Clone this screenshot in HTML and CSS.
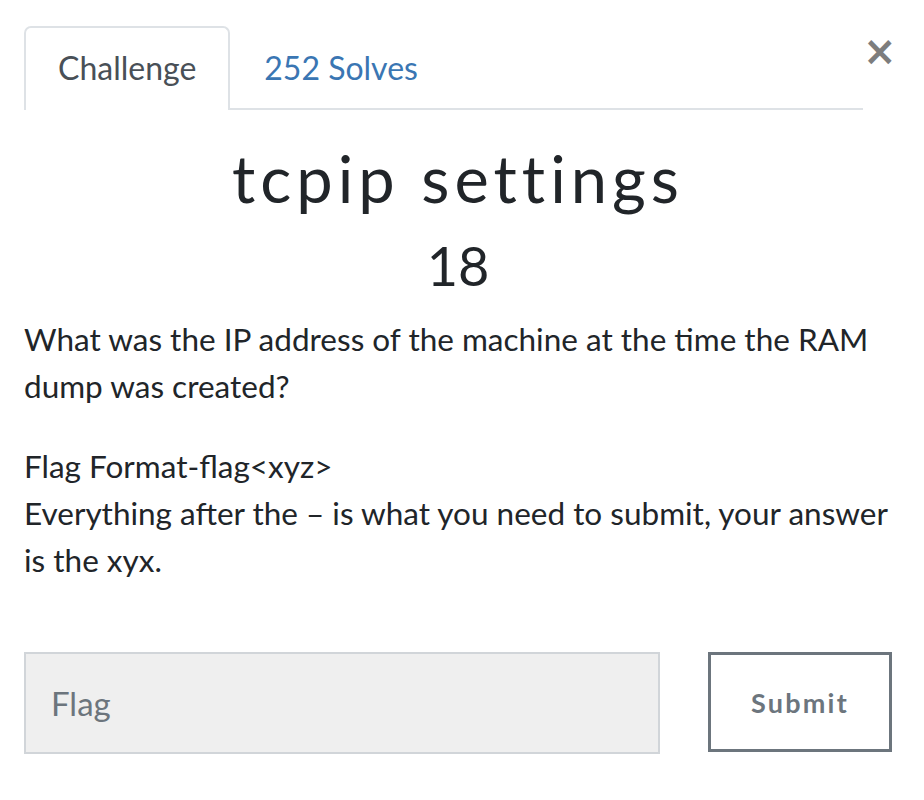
FILE: index.html
```html
<!DOCTYPE html>
<html lang="en">
<head>
<meta charset="UTF-8">
<meta name="viewport" content="width=device-width, initial-scale=1.0">
<title>tcpip settings</title>
<link rel="stylesheet" href="styles.css">
</head>
<body>
    <!-- challenge modal -->
    <div class="modal">
        <div class="modal-head">
            <ul class="nav-tabs">
                <li class="tab active">Challenge</li>
                <li class="tab"><a href="#solves">252 Solves</a></li>
            </ul>
            <button class="close" type="button">&times;</button>
        </div>

        <div class="challenge">
            <h2 class="challenge-name">tcpip settings</h2>
            <h3 class="challenge-value">18</h3>
            <div class="challenge-desc">
                <p>What was the IP address of the machine at the time the RAM dump was created?</p>
                <p>Flag Format-flag&lt;xyz&gt;<br>Everything after the – is what you need to submit, your answer is the xyx.</p>
            </div>
        </div>

        <!-- flag form -->
        <form class="flag-form">
            <input class="flag-input" type="text" placeholder="Flag">
            <button class="submit" type="button">Submit</button>
        </form>
    </div>
</body>
</html>
```

FILE: styles.css
```css
body {
    margin: 0;
    background: #fff;
    color: #212529;
    font-family: Lato, "Liberation Sans", sans-serif;
}

.modal {
    padding: 26px 32px 0 24px;
}

.modal-head {
    display: flex;
    align-items: flex-start;
}

.nav-tabs {
    flex: 1;
    display: flex;
    margin: 0;
    padding: 0;
    list-style: none;
    border-bottom: 2px solid #dee2e6;
}

.tab {
    padding: 0 32px;
    height: 80px;
    line-height: 80px;
    font-size: 32px;
    border: 2px solid transparent;
    border-bottom: 0;
    margin-bottom: -2px;
}

.tab.active {
    color: #495057;
    border-color: #dee2e6;
    border-radius: 7px 7px 0 0;
    background: #fff;
    height: 82px;
}

.tab a {
    color: #3a76b3;
    text-decoration: none;
}

.close {
    width: 29px;
    margin-top: 5px;
    padding: 0;
    border: 0;
    background: none;
    color: #7d7d7d;
    font-family: "DejaVu Sans", sans-serif;
    font-size: 40px;
    font-weight: bold;
    line-height: 40px;
    text-align: center;
}

.challenge-name {
    margin: 32px 0 0;
    text-align: center;
    font-size: 65px;
    font-weight: 400;
    letter-spacing: 5px;
    line-height: 72px;
}

.challenge-value {
    margin: 20px 0 0;
    text-align: center;
    font-size: 54px;
    font-weight: 400;
    line-height: 64px;
}

.challenge-desc {
    margin-top: 18px;
    font-size: 31.5px;
    line-height: 47px;
}

.challenge-desc p {
    margin: 0 0 33px;
}

.challenge-desc p:last-child {
    margin-bottom: 0;
}

.flag-form {
    display: flex;
    gap: 48px;
    margin-top: 68px;
}

.flag-input {
    flex: 1;
    height: 102px;
    box-sizing: border-box;
    padding: 0 25px;
    background: #efefef;
    border: 2px solid #d1d5d9;
    font-family: Lato, sans-serif;
    font-size: 33px;
    color: #495057;
}

.flag-input::placeholder {
    color: #6c757d;
}

.submit {
    width: 184px;
    height: 100px;
    background: #fff;
    border: 3px solid #6c757d;
    color: #6c757d;
    font-family: Lato, sans-serif;
    font-size: 27px;
    font-weight: bold;
    letter-spacing: 2.2px;
}
```
